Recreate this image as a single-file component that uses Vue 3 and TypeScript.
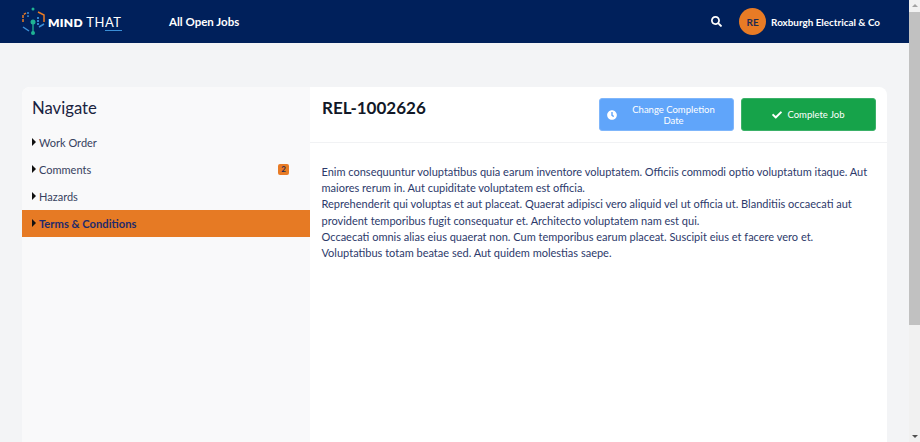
<script setup lang="ts">
const navItems = [
  { label: 'Work Order', active: false, badge: 0 },
  { label: 'Comments', active: false, badge: 2 },
  { label: 'Hazards', active: false, badge: 0 },
  { label: 'Terms & Conditions', active: true, badge: 0 },
]
</script>

<template>
  <div class="window">
    <div class="page">
      <header class="topbar">
        <div class="logo">
          <svg class="logo-mark" width="36" height="30" viewBox="0 0 36 30" fill="none">
            <path d="M2 15V8L5 6" stroke="#e87b25" stroke-width="1.500" stroke-dasharray="3 1" />
            <path d="M17 5l6 3v7" stroke="#e87b25" stroke-width="1.500" />
            <path d="M7 5v5" stroke="#3a8fd8" stroke-width="1.500" stroke-dasharray="2 1.200" />
            <path d="M17 10v8" stroke="#3a8fd8" stroke-width="1.800" stroke-dasharray="2 1" />
            <path d="M2 20l6 4" stroke="#3a8fd8" stroke-width="1.500" />
            <path d="M18 20l5-3" stroke="#3a8fd8" stroke-width="1.500" />
            <path d="M12 15v11" stroke="#1fb394" stroke-width="1.300" />
            <circle cx="12" cy="2" r="1.500" fill="#1fb394" />
            <circle cx="12" cy="15" r="2.500" fill="#1fb394" />
            <circle cx="12" cy="26" r="2" fill="#1fb394" />
          </svg>
          <span class="logo-text"><b>MIND</b> TH<span class="logo-under">AT</span></span>
        </div>
        <nav class="top-link">All Open Jobs</nav>
        <div class="top-right">
          <svg class="search" width="11" height="11" viewBox="0 0 512 512">
            <path fill="#fff" d="M505 442.700 405.300 343c-4.500-4.500-10.600-7-17-7H372c27.600-35.300 44-79.700 44-128C416 93.100 322.900 0 208 0S0 93.100 0 208s93.100 208 208 208c48.300 0 92.700-16.400 128-44v16.300c0 6.400 2.500 12.500 7 17l99.700 99.700c9.400 9.400 24.600 9.400 33.900 0l28.300-28.300c9.400-9.400 9.400-24.600.1-34zM208 336c-70.700 0-128-57.200-128-128 0-70.700 57.200-128 128-128 70.700 0 128 57.200 128 128 0 70.700-57.200 128-128 128z" />
          </svg>
          <div class="avatar">RE</div>
          <span class="company">Roxburgh Electrical &amp; Co</span>
        </div>
      </header>

      <main class="content">
        <section class="card">
          <aside class="sidebar">
            <h2 class="nav-title">Navigate</h2>
            <ul class="nav-list">
              <li v-for="item in navItems" :key="item.label" class="nav-item" :class="{ active: item.active }">
                <span class="caret"></span>
                <span class="nav-label">{{ item.label }}</span>
                <span v-if="item.badge" class="badge">{{ item.badge }}</span>
              </li>
            </ul>
          </aside>
          <div class="detail">
            <div class="detail-head">
              <h1 class="job-id">REL-1002626</h1>
              <div class="actions">
                <button class="btn btn-blue">
                  <svg width="10" height="10" viewBox="0 0 512 512">
                    <path fill="#fff" d="M256 8C119 8 8 119 8 256s111 248 248 248 248-111 248-248S393 8 256 8zm57.100 350.100L224.900 294c-3.100-2.300-4.900-5.900-4.900-9.700V116c0-6.600 5.400-12 12-12h48c6.600 0 12 5.400 12 12v137.700l63.500 46.200c5.400 3.900 6.500 11.400 2.600 16.800l-28.200 38.800c-3.900 5.300-11.400 6.500-16.800 2.600z" />
                  </svg>
                  <span class="btn-text">Change Completion Date</span>
                </button>
                <button class="btn btn-green">
                  <svg width="10" height="10" viewBox="0 0 512 512">
                    <path fill="#fff" d="M173.900 439.400 7.500 273c-10-10-10-26.200 0-36.200l36.200-36.200c10-10 26.200-10 36.200 0L192 312.700 432.100 72.600c10-10 26.200-10 36.200 0l36.200 36.200c10 10 10 26.200 0 36.200L210.100 439.400c-10 10-26.200 10-36.200 0z" />
                  </svg>
                  <span>Complete Job</span>
                </button>
              </div>
            </div>
            <div class="detail-body">
              <p>Enim consequuntur voluptatibus quia earum inventore voluptatem. Officiis commodi optio voluptatum itaque. Aut maiores rerum in. Aut cupiditate voluptatem est officia.</p>
              <p>Reprehenderit qui voluptas et aut placeat. Quaerat adipisci vero aliquid vel ut officia ut. Blanditiis occaecati aut provident temporibus fugit consequatur et. Architecto voluptatem nam est qui.</p>
              <p>Occaecati omnis alias eius quaerat non. Cum temporibus earum placeat. Suscipit eius et facere vero et. Voluptatibus totam beatae sed. Aut quidem molestias saepe.</p>
            </div>
          </div>
        </section>
      </main>
    </div>

    <div class="scrollbar">
      <span class="arrow up"></span>
      <div class="thumb"></div>
      <span class="arrow down"></span>
    </div>
  </div>
</template>

<style>
html, body { margin: 0; overflow: hidden; }
</style>

<style scoped>
.window {
  display: flex;
  width: 920px;
  height: 442px;
  overflow: hidden;
  font-family: "Lato", "Noto Sans", sans-serif;
  color: #1f2a52;
}
.page {
  flex: 1;
  min-width: 0;
  display: flex;
  flex-direction: column;
  background: #f3f4f6;
}
.topbar {
  height: 43px;
  flex: none;
  display: flex;
  align-items: center;
  background: #00205b;
  color: #fff;
  padding: 0 29px 0 21px;
}
.logo { display: flex; align-items: center; width: 148px; }
.logo-mark { flex: none; margin-top: 1px; margin-right: -9px; }
.logo-text { font-size: 13px; letter-spacing: .5px; font-weight: 400; white-space: nowrap; }
.logo-text b { font-size: 12px; letter-spacing: .3px; font-weight: 800; }
.logo-under { border-bottom: 1px solid #3a8fd8; }
.top-link { font-size: 11.500px; font-weight: 700; }
.top-right { margin-left: auto; display: flex; align-items: center; font-size: 9.900px; font-weight: 700; }
.search { margin-right: 17px; }
.avatar {
  width: 27px;
  height: 27px;
  border-radius: 50%;
  background: #e87b25;
  color: #1f2a52;
  font-size: 10px;
  font-weight: 700;
  display: flex;
  align-items: center;
  justify-content: center;
  margin-right: 5px;
}
.content { flex: 1; min-height: 0; padding: 44px 22px 0; overflow: hidden; }
.card {
  display: flex;
  height: 400px;
  background: #fff;
  border-radius: 8px 8px 0 0;
  overflow: hidden;
}
.sidebar { width: 288px; flex: none; background: #f9f9fa; }
.nav-title { margin: 0; padding: 9px 0 0 10px; font-size: 16.700px; line-height: 24px; font-weight: 400; color: #1a2340; }
.nav-list { list-style: none; margin: 9px 0 0; padding: 0; }
.nav-item {
  height: 27px;
  display: flex;
  align-items: center;
  padding: 0 21px 0 10px;
  font-size: 11px;
  color: #374160;
}
.nav-item.active { background: #e67a24; font-weight: 700; font-size: 11.200px; color: #1f2a6b; }
.caret {
  width: 0;
  height: 0;
  border-left: 4px solid #111;
  border-top: 4px solid transparent;
  border-bottom: 4px solid transparent;
  margin-right: 3px;
  margin-top: -2px;
}
.badge {
  margin-left: auto;
  width: 11px;
  height: 11px;
  line-height: 11px;
  text-align: center;
  font-size: 8px;
  font-weight: 700;
  background: #e87b25;
  border-radius: 2px;
  color: #1f2a52;
}
.detail { flex: 1; min-width: 0; }
.detail-head {
  height: 56px;
  box-sizing: border-box;
  border-bottom: 1px solid #f1f2f4;
  display: flex;
  justify-content: space-between;
  padding: 11px 11px 0 12px;
}
.job-id { margin: -1px 0 0; font-size: 17px; line-height: 22px; font-weight: 700; color: #111827; }
.actions { display: flex; gap: 7px; flex: none; }
.btn {
  width: 135px;
  height: 33px;
  box-sizing: border-box;
  border: 1px solid #e5e7eb;
  border-radius: 3px;
  display: flex;
  align-items: center;
  justify-content: center;
  color: #fff;
  font-family: inherit;
  font-size: 9.500px;
  line-height: 11px;
  gap: 5px;
  padding: 0 7px;
}
.btn-blue { background: #60a5fa; border-color: #7fb6fb; }
.btn-green { background: #16a34a; border-color: #3bb168; }
.btn-text { flex: 1; text-align: center; padding: 0 4px 0 3px; }
.detail-body { padding: 21px 12px 0 11.500px; font-size: 11px; line-height: 16.200px; color: #2d3a6b; }
.detail-body p { margin: 0; }
.scrollbar {
  width: 11px;
  flex: none;
  background: #f1f1f1;
  display: flex;
  flex-direction: column;
  align-items: center;
}
.thumb { width: 100%; height: 313px; background: #c1c1c1; }
.arrow { width: 0; height: 0; border-left: 3px solid transparent; border-right: 3px solid transparent; }
.arrow.up { border-bottom: 3px solid #a3a3a3; margin: 4px 0 5px; }
.arrow.down { border-top: 3px solid #505050; margin-top: auto; margin-bottom: 4px; }
</style>
